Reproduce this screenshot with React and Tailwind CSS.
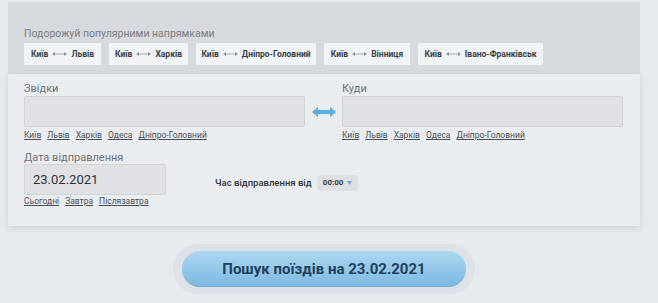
import React from "react";

const routes = [
  { to: "Львів", w: "w-[77px]" },
  { to: "Харків", w: "w-[79px]" },
  { to: "Дніпро-Головний", w: "w-[120px]" },
  { to: "Вінниця", w: "w-[86px]" },
  { to: "Івано-Франківськ", w: "w-[125px]" },
];

const cities = ["Київ", "Львів", "Харків", "Одеса", "Дніпро-Головний"];

const SmallArrows = () => (
  <svg width="15" height="6" viewBox="0 0 15 6" className="mx-[4px]">
    <path d="M0 3 L3 1 L3 5 Z" fill="#8a8f95" />
    <path d="M15 3 L12 1 L12 5 Z" fill="#8a8f95" />
    <line x1="2" y1="3" x2="13" y2="3" stroke="#a5a9ae" strokeWidth="1" />
  </svg>
);

const SwapArrow = () => (
  <svg width="24" height="12" viewBox="0 0 24 12">
    <path d="M0 6 L6 1 L6 11 Z" fill="#5aaddf" />
    <path d="M24 6 L18 1 L18 11 Z" fill="#5aaddf" />
    <rect x="5" y="4" width="14" height="4" fill="#5aaddf" />
  </svg>
);

const CityLinks = () => (
  <div className="flex gap-[6px] mt-[3px] text-[8.5px] leading-[11px] text-[#4a4f55]">
    {cities.map((c) => (
      <span key={c} className="underline">
        {c}
      </span>
    ))}
  </div>
);

export default function App() {
  return (
    <div
      className="w-[658px] h-[303px] overflow-hidden bg-[#e8ebee]"
      style={{ fontFamily: "Roboto, 'Liberation Sans', sans-serif" }}
    >
      <div className="ml-[8px] w-[632px]">
        {/* Popular routes */}
        <div className="mt-[2px] bg-[#d6d9dd] px-[16px] pt-[25px] pb-[9px]">
          <div className="text-[10.5px] leading-[13px] text-[#7a7e83]">
            Подорожуй популярними напрямками
          </div>
          <div className="flex gap-[8px] mt-[3px]">
            {routes.map((r) => (
              <div
                key={r.to}
                className={`${r.w} h-[22px] bg-[#f1f4f7] flex items-center justify-center text-[8.5px] font-bold text-[#3a3e43]`}
              >
                <span>Київ</span>
                <SmallArrows />
                <span>{r.to}</span>
              </div>
            ))}
          </div>
        </div>

        {/* Form */}
        <div className="bg-[#eaedf0] px-[16px] pt-[8px] pb-[19px] shadow-[0_2px_6px_rgba(0,0,0,0.12)]">
          <div className="flex items-start">
            <div className="w-[281px]">
              <div className="text-[11px] leading-[14px] text-[#6f7378]">Звідки</div>
              <div className="h-[31px] bg-[#dfe1e4] border border-[#d0d3d6] rounded-[2px]" />
              <CityLinks />
            </div>
            <div className="w-[37px] h-[45px] flex items-end justify-center pb-[9px]">
              <SwapArrow />
            </div>
            <div className="w-[281px]">
              <div className="text-[11px] leading-[14px] text-[#6f7378]">Куди</div>
              <div className="h-[31px] bg-[#dfe1e4] border border-[#d0d3d6] rounded-[2px]" />
              <CityLinks />
            </div>
          </div>

          <div className="flex items-start mt-[10px]">
            <div className="w-[191px]">
              <div className="text-[11px] leading-[13px] text-[#6f7378]">
                Дата відправлення
              </div>
              <div className="w-[142px] h-[31px] bg-[#dfe1e4] border border-[#d0d3d6] rounded-[2px] flex items-center pl-[8px] text-[13px] text-[#2f3338]">
                23.02.2021
              </div>
              <div className="flex gap-[6px] mt-[1px] text-[8.5px] leading-[11px] text-[#4a4f55]">
                <span className="underline">Сьогодні</span>
                <span className="underline">Завтра</span>
                <span className="underline">Післязавтра</span>
              </div>
            </div>
            <div className="flex items-center mt-[24px]">
              <span className="text-[9.5px] font-medium text-[#2f3338]">
                Час відправлення від
              </span>
              <div className="ml-[6px] w-[40px] h-[16px] bg-[#dcdfe2] rounded-[2px] flex items-center justify-center gap-[4px] text-[8px] font-bold text-[#3a3e43]">
                <span>00:00</span>
                <svg width="5" height="4" viewBox="0 0 5 4">
                  <path d="M0 0 L5 0 L2.5 4 Z" fill="#6aa9d6" />
                </svg>
              </div>
            </div>
          </div>
        </div>

        {/* Search button */}
        <div className="flex justify-center mt-[18px]">
          <div className="rounded-full bg-[#dce2e7] px-[9px] py-[7px]">
            <div className="w-[284px] h-[36px] rounded-full bg-gradient-to-b from-[#acd7f0] to-[#7cb8e1] flex items-center justify-center text-[15px] font-bold text-[#23405c] shadow-[inset_0_-1px_0_rgba(0,0,0,0.08)]">
              Пошук поїздів на 23.02.2021
            </div>
          </div>
        </div>
      </div>
    </div>
  );
}
